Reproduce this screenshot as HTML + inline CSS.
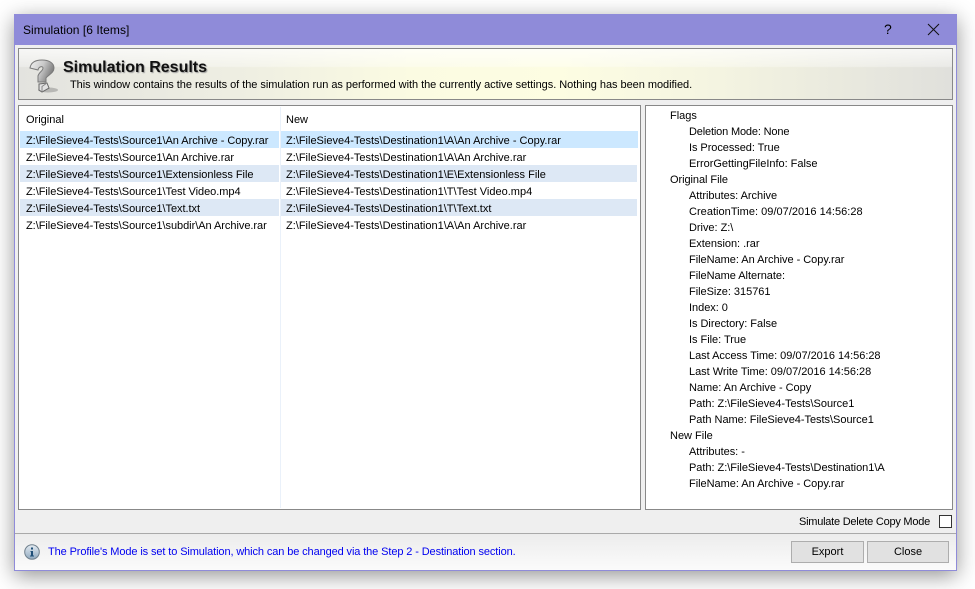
<!DOCTYPE html>
<html><head><meta charset="utf-8"><style>
html,body{margin:0;padding:0;background:#fff;width:975px;height:589px;overflow:hidden}
body{font-family:"Liberation Sans","DejaVu Sans",sans-serif;font-size:11px;color:#000;position:relative}
div,span.t{position:absolute;box-sizing:border-box}
.t{white-space:nowrap;line-height:16px;height:16px}
.s{letter-spacing:-.04px}.p{letter-spacing:-.03px}
#win{left:14px;top:14px;width:943px;height:557px;background:#efefef;border:1px solid #8f8bd9;box-shadow:0 5px 20px rgba(0,0,0,.42)}
#bar{left:14px;top:14px;width:943px;height:31px;background:#8f8bd9}
#ban{left:18px;top:48px;width:935px;height:52px;border:1px solid #888;background:linear-gradient(180deg,rgba(255,255,255,.72) 0,rgba(255,255,255,.32) 35%,rgba(255,255,255,0) 37%),linear-gradient(90deg,#e3e3df 0,#efefe2 25%,#fbfbe2 42%,#fdfde2 58%,#f4f4e1 75%,#e0e0dc 100%)}
.box{background:#fff;border:1px solid #888}
.hl{background:#dde8f5;height:17px}.sel{background:#cce8ff;height:17px}
.btn{background:#e1e1e1;border:1px solid #adadad;text-align:center;line-height:20px;top:541px;height:22px}
#foot{left:15px;top:533px;width:941px;height:37px;border-top:1px solid #a9a9a9;background:linear-gradient(180deg,#ececec,#fbfbfb)}
</style></head><body>
<div id="win"></div><div id="bar"></div>
<span class="t" style="left:23px;top:22px;font-size:12px;letter-spacing:.05px">Simulation [6 Items]</span>
<span class="t" style="left:884px;top:21px;font-size:14px">?</span>
<svg style="position:absolute;left:927px;top:23px" width="13" height="13"><path d="M1 1L12 12M12 1L1 12" stroke="#111" stroke-width="1" fill="none"/></svg>
<div id="ban"></div>
<svg style="position:absolute;left:27px;top:57px" width="34" height="37" viewBox="0 0 34 37">
<defs><linearGradient id="q" x1="0" y1="0" x2="1" y2=".4"><stop offset="0" stop-color="#f2f2f2"/><stop offset=".55" stop-color="#c9c9c9"/><stop offset="1" stop-color="#7d7d7d"/></linearGradient></defs>
<ellipse cx="21" cy="33" rx="10" ry="2.5" fill="#8a8a8a" opacity=".5"/>
<path d="M3 11C4 5 9 3 15 3C22 3 27 6 27 11C27 16 21 18 19 21V25H11V19C12 15 16 14 16 11C16 9 12 9 11 13Z" fill="url(#q)" stroke="#7a7a7a" stroke-width="1"/>
<path d="M12 27L20 26L22 31L15 35L12 33Z" fill="#e2e2e2" stroke="#666" stroke-width="1"/>
<path d="M15 35V29.5L20 26" fill="none" stroke="#888" stroke-width="1"/>
</svg>
<span class="t" style="left:63px;top:59px;font:bold 16px/17px 'Liberation Sans',sans-serif;color:#111;text-shadow:1px 1px 1px #999">Simulation Results</span>
<span class="t" style="left:70px;top:77px;letter-spacing:-.04px">This window contains the results of the simulation run as performed with the currently active settings. Nothing has been modified.</span>

<div class="box" style="left:18px;top:105px;width:623px;height:405px"></div>
<div style="left:280px;top:107px;width:1px;height:401px;background:#eaf1fa"></div>
<span class="t" style="left:26px;top:112px">Original</span>
<span class="t" style="left:286px;top:112px">New</span>

<div class="sel" style="left:20px;top:131px;width:259px"></div><div class="sel" style="left:281px;top:131px;width:357px"></div>
<div class="hl" style="left:20px;top:165px;width:259px"></div><div class="hl" style="left:281px;top:165px;width:356px"></div>
<div class="hl" style="left:20px;top:199px;width:259px"></div><div class="hl" style="left:281px;top:199px;width:356px"></div>

<span class="t s" style="left:26px;top:133px">Z:\FileSieve4-Tests\Source1\An Archive - Copy.rar</span>
<span class="t s" style="left:26px;top:150px">Z:\FileSieve4-Tests\Source1\An Archive.rar</span>
<span class="t s" style="left:26px;top:167px">Z:\FileSieve4-Tests\Source1\Extensionless File</span>
<span class="t s" style="left:26px;top:184px">Z:\FileSieve4-Tests\Source1\Test Video.mp4</span>
<span class="t s" style="left:26px;top:201px">Z:\FileSieve4-Tests\Source1\Text.txt</span>
<span class="t s" style="left:26px;top:218px">Z:\FileSieve4-Tests\Source1\subdir\An Archive.rar</span>
<span class="t" style="left:286px;top:133px">Z:\FileSieve4-Tests\Destination1\A\An Archive - Copy.rar</span>
<span class="t" style="left:286px;top:150px">Z:\FileSieve4-Tests\Destination1\A\An Archive.rar</span>
<span class="t" style="left:286px;top:167px">Z:\FileSieve4-Tests\Destination1\E\Extensionless File</span>
<span class="t" style="left:286px;top:184px">Z:\FileSieve4-Tests\Destination1\T\Test Video.mp4</span>
<span class="t" style="left:286px;top:201px">Z:\FileSieve4-Tests\Destination1\T\Text.txt</span>
<span class="t" style="left:286px;top:218px">Z:\FileSieve4-Tests\Destination1\A\An Archive.rar</span>

<div class="box" style="left:645px;top:105px;width:308px;height:405px"></div>
<span class="t" style="left:670px;top:108px">Flags</span>
<span class="t" style="left:689px;top:124px;letter-spacing:-.16px">Deletion Mode: None</span>
<span class="t" style="left:689px;top:140px;letter-spacing:-.06px">Is Processed: True</span>
<span class="t" style="left:689px;top:156px;letter-spacing:-.02px">ErrorGettingFileInfo: False</span>
<span class="t" style="left:670px;top:172px;letter-spacing:-.06px">Original File</span>
<span class="t p" style="left:689px;top:188px">Attributes: Archive</span>
<span class="t" style="left:689px;top:204px;letter-spacing:.03px">CreationTime: 09/07/2016 14:56:28</span>
<span class="t p" style="left:689px;top:220px">Drive: Z:\</span>
<span class="t p" style="left:689px;top:236px">Extension: .rar</span>
<span class="t p" style="left:689px;top:252px">FileName: An Archive - Copy.rar</span>
<span class="t p" style="left:689px;top:268px">FileName Alternate:</span>
<span class="t p" style="left:689px;top:284px">FileSize: 315761</span>
<span class="t p" style="left:689px;top:300px">Index: 0</span>
<span class="t p" style="left:689px;top:316px">Is Directory: False</span>
<span class="t p" style="left:689px;top:332px">Is File: True</span>
<span class="t p" style="left:689px;top:348px">Last Access Time: 09/07/2016 14:56:28</span>
<span class="t p" style="left:689px;top:364px">Last Write Time: 09/07/2016 14:56:28</span>
<span class="t p" style="left:689px;top:380px">Name: An Archive - Copy</span>
<span class="t p" style="left:689px;top:396px">Path: Z:\FileSieve4-Tests\Source1</span>
<span class="t p" style="left:689px;top:412px">Path Name: FileSieve4-Tests\Source1</span>
<span class="t" style="left:670px;top:428px">New File</span>
<span class="t p" style="left:689px;top:444px">Attributes: -</span>
<span class="t p" style="left:689px;top:460px">Path: Z:\FileSieve4-Tests\Destination1\A</span>
<span class="t p" style="left:689px;top:476px">FileName: An Archive - Copy.rar</span>

<span class="t" style="left:799px;top:514px;letter-spacing:-.24px">Simulate Delete Copy Mode</span>
<div style="left:939px;top:515px;width:13px;height:13px;background:#fff;border:1px solid #333"></div>

<div id="foot"></div>
<svg style="position:absolute;left:24px;top:544px" width="16" height="16" viewBox="0 0 16 16">
<defs><linearGradient id="g" x1="0" y1="0" x2="0" y2="1"><stop offset="0" stop-color="#e6edf3"/><stop offset="1" stop-color="#8fa9bf"/></linearGradient></defs>
<circle cx="8" cy="8" r="7.3" fill="url(#g)" stroke="#6f7f8c"/>
<rect x="7" y="3.5" width="2" height="2" fill="#1f4f78"/><path d="M6.5 7H9V11.5H10V12.5H6V11.5H7V8H6.5Z" fill="#1f4f78"/>
</svg>
<span class="t" style="left:48px;top:544px;color:#0000f0;letter-spacing:-.11px">The Profile's Mode is set to Simulation, which can be changed via the Step 2 - Destination section.</span>
<div class="btn" style="left:791px;width:73px">Export</div>
<div class="btn" style="left:867px;width:82px">Close</div>
</body></html>
